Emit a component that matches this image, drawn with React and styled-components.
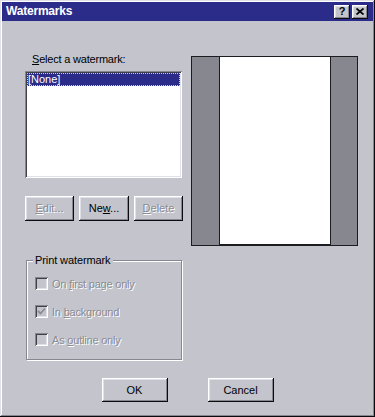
import React from "react";
import styled, { createGlobalStyle } from "styled-components";

const FACE = "#c3c4cc";
const SHADOW = "#86878f";
const LIGHT = "#dfe0e8";
const DARK = "#0c0c10";
const NAVY = "#2b2c8a";
const DISABLED = "#8a8b93";

const Global = createGlobalStyle`
  html, body { margin: 0; padding: 0; background: ${FACE}; }
  body { font-family: "Liberation Sans", Arial, sans-serif; font-size: 11px; color: #000; }
  * { box-sizing: border-box; }
`;

const Window = styled.div`
  width: 375px;
  height: 417px;
  padding: 2px;
  background: ${FACE};
  box-shadow: inset -1px -1px ${DARK}, inset 1px 1px ${LIGHT},
    inset -2px -2px ${SHADOW}, inset 2px 2px #fff;
  display: flex;
  flex-direction: column;
`;

const TitleBar = styled.div`
  height: 19px;
  background: ${NAVY};
  display: flex;
  align-items: center;
  padding: 0 5px 0 4px;
  gap: 2px;
`;

const Title = styled.div`
  flex: 1;
  color: #fff;
  font-weight: bold;
  font-size: 12px;
  letter-spacing: -0.2px;
  line-height: 19px;
`;

const CapButton = styled.div`
  width: 16px;
  height: 14px;
  background: ${FACE};
  box-shadow: inset -1px -1px ${DARK}, inset 1px 1px #fff,
    inset -2px -2px ${SHADOW}, inset 2px 2px ${LIGHT};
  display: flex;
  align-items: center;
  justify-content: center;
  font-weight: bold;
  font-size: 11px;
  line-height: 12px;
  padding-bottom: 1px;
`;

const Content = styled.div`
  padding-top: 31px;
  display: flex;
  flex-direction: column;
`;

const Main = styled.div`
  margin-left: 23px;
  display: flex;
  gap: 8px;
  align-items: flex-start;
`;

const LeftCol = styled.div`
  width: 158px;
  display: flex;
  flex-direction: column;
`;

const Label = styled.div`
  line-height: 15px;
  margin-bottom: 4px;
  padding-left: 7px;
  letter-spacing: -0.2px;
`;

const Key = styled.span`
  text-decoration: underline;
  text-underline-offset: 1px;
`;

const ListBox = styled.div`
  width: 157px;
  height: 107px;
  background: #fff;
  padding: 2px;
  box-shadow: inset 1px 1px ${SHADOW}, inset -1px -1px #fff,
    inset 2px 2px #404048, inset -2px -2px ${LIGHT};
`;

const ListItem = styled.div`
  height: 13px;
  background: ${NAVY};
  color: #fff;
  line-height: 11px;
  border: 1px dotted #d8d8a0;
`;

const ButtonRow = styled.div`
  margin-top: 18px;
  display: flex;
  justify-content: space-between;
`;

const Button = styled.div`
  width: ${(p) => p.$w}px;
  height: ${(p) => p.$h}px;
  background: ${FACE};
  box-shadow: inset -1px -1px ${DARK}, inset 1px 1px #fff,
    inset -2px -2px ${SHADOW}, inset 2px 2px ${LIGHT};
  display: flex;
  align-items: center;
  justify-content: center;
  color: ${(p) => (p.$disabled ? DISABLED : "#000")};
  text-shadow: ${(p) => (p.$disabled ? "1px 1px 0 #fff" : "none")};
  padding-bottom: 1px;
`;

const GroupBox = styled.fieldset`
  margin: 33px 0 0 1px;
  width: 156px;
  padding: 10px 6px 13px 6px;
  border: 1px solid ${SHADOW};
  box-shadow: inset 1px 1px 0 #fff, 1px 1px 0 #fff;
  min-inline-size: 0;
`;

const Legend = styled.legend`
  padding: 0 2px;
  line-height: 13px;
  background: ${FACE};
  letter-spacing: -0.1px;
`;

const Rows = styled.div`
  display: flex;
  flex-direction: column;
  gap: 15px;
  padding-left: 2px;
`;

const CheckRow = styled.div`
  height: 13px;
  display: flex;
  align-items: center;
  gap: 4px;
  color: ${DISABLED};
  text-shadow: 1px 1px 0 #fff;
  letter-spacing: -0.2px;
`;

const Box = styled.div`
  width: 13px;
  height: 13px;
  flex: none;
  background: ${FACE};
  box-shadow: inset 1px 1px ${SHADOW}, inset -1px -1px #fff,
    inset 2px 2px #404048, inset -2px -2px ${LIGHT};
  display: flex;
  align-items: center;
  justify-content: center;
`;

const Preview = styled.div`
  margin-top: 4px;
  width: 167px;
  height: 190px;
  border: 1px solid #1c1c20;
  background: ${SHADOW};
  display: flex;
  justify-content: center;
`;

const Page = styled.div`
  width: 112px;
  height: 100%;
  background: #fff;
  border-left: 1px solid #1c1c20;
  border-right: 1px solid #1c1c20;
  border-bottom: 1px solid #1c1c20;
`;

const Footer = styled.div`
  margin-top: 18px;
  display: flex;
  justify-content: center;
  gap: 40px;
`;

const Check = ({ checked, children }) => (
  <CheckRow>
    <Box>
      {checked && (
        <svg width="9" height="9" viewBox="0 0 9 9">
          <path d="M1 4 L3.5 6.5 L8 1.5" stroke={DISABLED} strokeWidth="1.8" fill="none" />
        </svg>
      )}
    </Box>
    <span>{children}</span>
  </CheckRow>
);

export default function App() {
  return (
    <>
      <Global />
      <Window>
        <TitleBar>
          <Title>Watermarks</Title>
          <CapButton>?</CapButton>
          <CapButton>
            <svg width="8" height="7" viewBox="0 0 8 7">
              <path d="M0.5 0.5 L7.5 6.5 M7.5 0.5 L0.5 6.5" stroke="#000" strokeWidth="1.7" fill="none" />
            </svg>
          </CapButton>
        </TitleBar>
        <Content>
          <Main>
            <LeftCol>
              <Label>
                <Key>S</Key>elect a watermark:
              </Label>
              <ListBox>
                <ListItem>[None]</ListItem>
              </ListBox>
              <ButtonRow>
                <Button $w={49} $h={25} $disabled>
                  <span><Key>E</Key>dit...</span>
                </Button>
                <Button $w={50} $h={25}>
                  <span>Ne<Key>w</Key>...</span>
                </Button>
                <Button $w={49} $h={25} $disabled>
                  <span><Key>D</Key>elete</span>
                </Button>
              </ButtonRow>
              <GroupBox>
                <Legend>Print watermark</Legend>
                <Rows>
                  <Check>On <Key>f</Key>irst page only</Check>
                  <Check checked>In <Key>b</Key>ackground</Check>
                  <Check>As <Key>o</Key>utline only</Check>
                </Rows>
              </GroupBox>
            </LeftCol>
            <Preview>
              <Page />
            </Preview>
          </Main>
          <Footer>
            <Button $w={66} $h={24}>OK</Button>
            <Button $w={66} $h={24}>Cancel</Button>
          </Footer>
        </Content>
      </Window>
    </>
  );
}
